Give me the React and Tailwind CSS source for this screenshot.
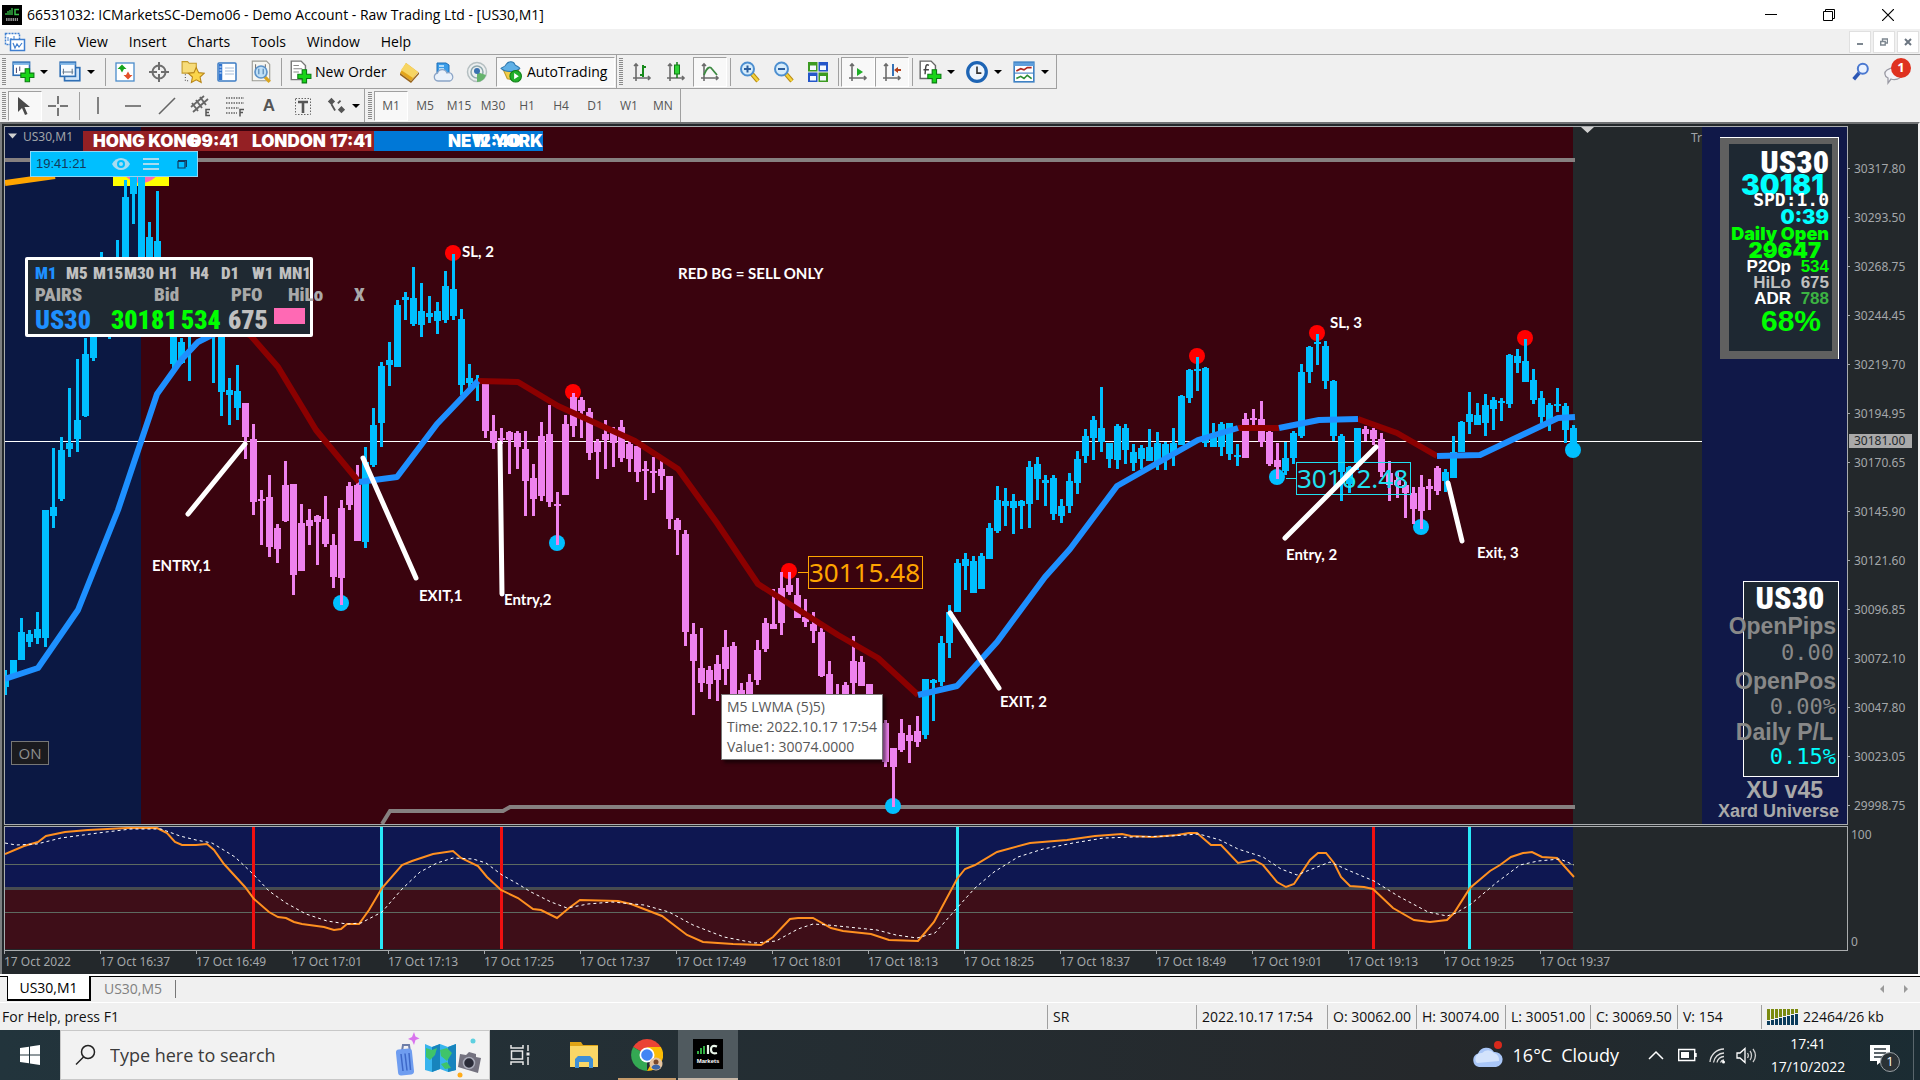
import React, { useState } from 'react';
import clsx from 'clsx';

/* ---------- chart data (screen space) ---------- */

// high, open/close top, open/close bottom, low
const CANDLES = [
  [670, 675, 687, 695], [660, 660, 677, 677], [618, 632, 660, 660], [630, 634, 642, 647], [612, 629, 638, 644],
  [510, 510, 638, 647], [448, 507, 516, 528], [437, 450, 499, 501], [388, 443, 449, 457], [359, 420, 439, 452],
  [338, 354, 416, 417], [290, 300, 358, 361], [252, 270, 320, 330], [262, 280, 328, 339], [240, 260, 300, 320],
  [180, 197, 258, 280], [160, 170, 194, 224], [160, 170, 270, 280], [222, 237, 300, 310], [191, 241, 320, 330],
  [262, 270, 322, 330], [290, 310, 364, 370], [338, 342, 363, 364], [300, 320, 330, 381], [280, 300, 325, 334],
  [285, 300, 326, 334], [290, 300, 330, 383], [300, 310, 392, 416], [378, 390, 395, 425], [365, 391, 408, 420],
  [403, 403, 437, 459], [424, 439, 502, 515], [490, 499, 501, 545], [475, 497, 547, 557], [524, 528, 549, 563],
  [461, 485, 521, 522], [484, 484, 575, 595], [504, 523, 571, 571], [509, 520, 526, 545], [515, 516, 522, 565],
  [496, 519, 544, 547], [534, 545, 577, 588], [500, 508, 578, 605], [482, 486, 505, 510], [465, 485, 541, 541],
  [447, 462, 542, 548], [408, 425, 465, 467], [362, 366, 423, 447], [342, 360, 365, 386], [300, 305, 367, 367],
  [292, 297, 300, 320], [267, 298, 324, 326], [283, 311, 325, 337], [296, 313, 317, 323], [302, 311, 321, 334],
  [271, 286, 320, 323], [254, 289, 316, 320], [309, 319, 385, 395], [364, 378, 383, 387], [375, 381, 384, 401],
  [384, 384, 431, 438], [415, 431, 443, 449], [428, 438, 440, 444], [431, 432, 440, 474], [431, 433, 447, 469],
  [431, 449, 481, 516], [464, 478, 499, 516], [422, 436, 496, 501], [405, 434, 502, 507], [492, 504, 506, 545],
  [415, 424, 495, 495], [393, 397, 426, 437], [397, 400, 411, 438], [408, 412, 453, 460], [439, 442, 452, 479],
  [420, 434, 440, 469], [427, 433, 443, 467], [420, 427, 458, 462], [442, 444, 459, 472], [446, 446, 472, 482],
  [461, 469, 471, 500], [457, 471, 473, 493], [461, 469, 476, 490], [476, 476, 519, 529], [518, 520, 530, 555],
  [530, 534, 632, 646], [623, 634, 661, 715], [628, 668, 683, 692], [666, 670, 684, 699], [655, 664, 680, 701],
  [630, 647, 669, 685], [642, 646, 697, 700], [683, 690, 700, 705], [674, 682, 700, 705], [640, 650, 680, 685],
  [618, 623, 649, 652], [589, 624, 629, 629], [572, 588, 623, 635], [572, 585, 592, 595], [578, 595, 618, 618],
  [599, 617, 622, 627], [612, 624, 631, 643], [628, 632, 676, 677], [661, 674, 700, 705], [684, 696, 700, 705],
  [682, 685, 700, 705], [636, 661, 683, 694], [656, 662, 686, 686], [684, 684, 694, 700], [694, 694, 710, 720],
  [720, 723, 762, 767], [748, 748, 767, 807], [719, 733, 750, 752], [725, 735, 741, 763], [716, 731, 742, 747],
  [679, 679, 735, 739], [679, 680, 683, 721], [636, 643, 682, 686], [605, 612, 643, 658], [559, 563, 612, 612],
  [553, 559, 566, 590], [556, 561, 593, 593], [553, 556, 589, 589], [523, 528, 559, 559], [486, 500, 531, 533],
  [488, 501, 506, 526], [494, 501, 508, 534], [500, 501, 506, 529], [461, 467, 504, 528], [457, 464, 479, 500],
  [475, 480, 483, 506], [475, 478, 514, 520], [499, 506, 516, 523], [473, 481, 506, 513], [451, 459, 483, 494],
  [429, 436, 456, 463], [416, 420, 438, 460], [387, 428, 442, 452], [443, 443, 459, 468], [424, 426, 460, 469],
  [424, 428, 450, 464], [444, 452, 463, 471], [445, 448, 459, 469], [429, 447, 461, 461], [432, 443, 463, 470],
  [442, 444, 460, 470], [428, 443, 453, 466], [395, 396, 445, 445], [369, 370, 398, 403], [357, 369, 371, 391],
  [367, 368, 443, 447], [423, 435, 447, 447], [422, 424, 447, 456], [423, 423, 454, 460], [444, 455, 457, 466],
  [413, 419, 458, 458], [409, 418, 420, 430], [401, 419, 442, 447], [430, 432, 464, 466], [443, 460, 467, 479],
  [442, 458, 471, 475], [431, 433, 458, 464], [364, 372, 436, 438], [346, 347, 372, 383], [334, 342, 344, 365],
  [341, 346, 381, 389], [380, 381, 436, 441], [434, 436, 472, 501], [466, 467, 484, 493], [428, 428, 463, 470],
  [426, 429, 434, 441], [428, 430, 439, 445], [433, 439, 472, 477], [461, 473, 485, 501], [472, 480, 485, 498],
  [482, 485, 493, 518], [487, 493, 509, 524], [475, 487, 511, 529], [479, 486, 489, 510], [466, 468, 491, 495],
  [469, 472, 481, 492], [436, 452, 478, 478], [421, 422, 452, 452], [392, 414, 422, 434], [403, 415, 425, 425],
  [394, 405, 423, 436], [397, 400, 409, 430], [398, 401, 403, 421], [354, 355, 404, 408], [349, 356, 363, 373],
  [339, 361, 382, 382], [369, 380, 400, 404], [391, 398, 417, 423], [403, 405, 423, 431], [388, 404, 406, 412],
  [403, 406, 430, 443], [425, 428, 445, 445],
];

const SELL_RANGES = [[30, 44], [60, 114], [155, 159], [170, 179]];
const isSell = (i) => SELL_RANGES.some(([a, b]) => i >= a && i <= b);

const MA_UP = [
  '5,679 38,668 78,610 118,510 157,394 182,359 198,342 212,335 238,328',
  '359,482 397,477 437,424 478,381',
  '918,695 957,686 997,642 1045,577 1070,549 1117,486 1198,440 1238,428',
  '1279,428 1319,420 1358,419',
  '1437,456 1480,455 1558,418 1575,417',
];
const MA_DOWN = [
  '238,328 251,336 278,367 316,430 359,482',
  '478,381 518,382 558,406 635,441 678,469 717,523 758,584 838,635 878,658 918,695',
  '1238,428 1279,428',
  '1358,419 1397,433 1437,456',
];

const HIGH_DOTS = [[453, 253], [573, 392], [789, 571], [1197, 356], [1317, 333], [1525, 338]];
const LOW_DOTS = [[341, 603], [557, 543], [893, 806], [1277, 477], [1421, 527], [1573, 450]];

const NOTE_LINES = [
  [245, 444, 188, 514], [363, 458, 416, 578], [500, 443, 502, 594], [950, 613, 999, 688],
  [1376, 447, 1285, 538], [1448, 483, 1462, 541],
];
const NOTES = [
  [462, 257, 'SL, 2'], [678, 279, 'RED BG = SELL ONLY'], [152, 571, 'ENTRY,1'], [419, 601, 'EXIT,1'],
  [504, 605, 'Entry,2'], [1000, 707, 'EXIT, 2'], [1286, 560, 'Entry, 2'], [1477, 558, 'Exit, 3'], [1330, 328, 'SL, 3'],
];

const OSC =
  '5,854 24,846 38,842 46,836 65,832 88,830 127,828 157,828 167,833 175,842 182,845 196,845 207,844 214,850 224,864 245,887 254,899 269,912 278,917 286,918 294,922 302,924 324,927 334,930 341,929 347,924 359,924 369,910 382,888 402,865 412,861 433,854 453,851 461,858 478,866 487,877 501,890 518,898 533,909 541,910 557,918 569,908 580,900 618,901 631,904 662,916 687,935 703,942 733,944 761,945 773,937 790,919 798,918 813,918 831,928 843,931 871,934 889,940 918,941 934,922 957,879 965,869 975,865 997,852 1030,843 1067,840 1095,836 1122,834 1131,836 1153,837 1177,835 1189,833 1197,833 1211,845 1221,845 1238,863 1254,860 1263,865 1277,882 1286,887 1294,884 1310,860 1318,853 1326,853 1334,863 1341,877 1350,886 1364,887 1373,889 1393,908 1414,920 1430,922 1447,920 1454,913 1470,888 1490,871 1500,865 1511,857 1523,853 1532,852 1542,857 1557,858 1574,877';
const SIGNAL =
  '5,843 16,845 37,844 61,838 98,833 131,829 161,829 180,836 196,840 212,843 222,849 235,857 253,874 269,891 286,903 306,914 327,921 347,924 361,923 382,912 402,889 420,872 437,863 453,858 473,859 486,863 502,875 518,884 531,892 551,902 567,908 588,904 612,902 644,905 669,912 693,925 724,937 755,943 776,941 798,929 813,924 828,925 877,930 896,935 917,938 935,933 957,908 975,888 994,872 1018,857 1043,849 1073,843 1104,838 1134,837 1171,836 1199,834 1220,840 1238,849 1263,857 1281,869 1297,875 1312,869 1330,862 1350,871 1374,881 1398,896 1428,912 1447,916 1456,913 1471,904 1496,883 1520,865 1538,861 1560,859 1574,865';

const PRICES = ['30317.80', '30293.50', '30268.75', '30244.45', '30219.70', '30194.95', '30170.65', '30145.90', '30121.60', '30096.85', '30072.10', '30047.80', '30023.05', '29998.75'];
const TIMES = ['17 Oct 2022', '17 Oct 16:37', '17 Oct 16:49', '17 Oct 17:01', '17 Oct 17:13', '17 Oct 17:25', '17 Oct 17:37', '17 Oct 17:49', '17 Oct 18:01', '17 Oct 18:13', '17 Oct 18:25', '17 Oct 18:37', '17 Oct 18:49', '17 Oct 19:01', '17 Oct 19:13', '17 Oct 19:25', '17 Oct 19:37'];

/* ---------- small parts ---------- */

const Svg = ({ size = 'size-[22px]', box = '0 0 22 22', children }) => (
  <svg viewBox={box} className={clsx('shrink-0', size)} fill="none" aria-hidden="true">{children}</svg>
);

const Grip = () => (
  <span className="ml-[2px] mr-[2px] h-[28px] w-1 shrink-0 bg-[repeating-linear-gradient(#8c8c8c_0_1px,#f0f0f0_1px_2px)]" />
);

const Sep = () => <span className="ml-[3px] mr-[2px] h-[28px] w-px shrink-0 bg-[#a0a0a0]" />;

const Tool = ({ label, pressed, children }) => (
  <button
    type="button"
    aria-label={label}
    className={clsx(
      'flex h-[30px] w-[34px] shrink-0 items-center justify-center border',
      pressed ? 'border-t-[#a0a0a0] border-l-[#a0a0a0] border-r-white border-b-white bg-[#f8f8f8]' : 'border-transparent'
    )}
  >
    {children}
  </button>
);

const Caret = () => <span className="border-x-4 border-t-4 border-x-transparent border-t-black" />;

const ToolDrop = ({ label, children }) => (
  <button type="button" aria-label={label} className="mr-[7px] flex h-[30px] w-[40px] shrink-0 items-center justify-between pl-[3px]">
    {children}
    <Caret />
  </button>
);

const Plus = ({ x = 10, y = 10 }) => (
  <path
    transform={`translate(${x} ${y})`}
    d="M4 0h4v4h4v4H8v4H4V8H0V4h4z"
    fill="#18d418"
    stroke="#0a7d12"
    strokeWidth="1"
  />
);

const Axes = ({ children }) => (
  <Svg>
    <path d="M5 3v17M2 17h17M3 5l2-2 2 2M17 15l2 2-2 2" stroke="#6b6b6b" strokeWidth="1.6" />
    {children}
  </Svg>
);

const Magnifier = ({ plus }) => (
  <Svg>
    <path d="M13 13l6 7" stroke="#b98a12" strokeWidth="4.5" />
    <path d="M13 13l6 7" stroke="#f3d23a" strokeWidth="2.5" />
    <circle cx="8.500" cy="8" r="6.500" fill="#d6ecfb" stroke="#4d8fd0" strokeWidth="2" />
    <path d={plus ? 'M5 8h7M8.500 4.500v7' : 'M5 8h7'} stroke="#2d5f9e" strokeWidth="2" />
  </Svg>
);

/* ---------- window chrome ---------- */

const TitleBar = () => (
  <header className="flex h-[29px] items-center bg-white pl-[2px] text-[14px] text-black">
    <svg viewBox="0 0 20 20" className="mr-[5px] size-5" aria-hidden="true">
      <rect width="20" height="20" fill="#000" />
      <path d="M4 10V8M6 10V6M8 10V5M10 10V3" stroke="#39c24a" strokeWidth="1.3" />
      <path d="M17 4.500h-4v5h4" stroke="#39c24a" strokeWidth="1.500" fill="none" />
      <path d="M4 14.500h12" stroke="#8f8f8f" strokeWidth="3" strokeDasharray="1.500 .7" />
    </svg>
    <h1 className="whitespace-nowrap">66531032: ICMarketsSC-Demo06 - Demo Account - Raw Trading Ltd - [US30,M1]</h1>
    <div className="ml-auto flex h-full pr-[2px]">
      <button type="button" aria-label="Minimize" className="flex w-[58px] items-center justify-center">
        <Svg size="size-3" box="0 0 12 12"><path d="M0 5.500h12" stroke="#000" /></Svg>
      </button>
      <button type="button" aria-label="Restore" className="flex w-[58px] items-center justify-center">
        <Svg size="size-3" box="0 0 12 12"><path d="M.5 2.500h9v9h-9zM2.500 2.500v-2h9v9h-2" stroke="#000" /></Svg>
      </button>
      <button type="button" aria-label="Close" className="flex w-[60px] items-center justify-center">
        <Svg size="size-3" box="0 0 12 12"><path d="M0 0l12 12M12 0L0 12" stroke="#000" strokeWidth="1.200" /></Svg>
      </button>
    </div>
  </header>
);

const MenuBar = () => (
  <nav className="flex h-[26px] items-center border-b border-[#a0a0a0] pl-1 text-[14px] text-black">
    <Svg>
      <rect x="1.500" y="2.500" width="14" height="11" fill="#fff" stroke="#3f7fd0" strokeWidth="1.500" strokeDasharray="2 1" />
      <path d="M4 10V6M7 11V7M10 9V5" stroke="#3f7fd0" />
      <rect x="6.500" y="8.500" width="14" height="11" fill="#fff" stroke="#3f7fd0" strokeWidth="1.500" />
      <path d="M9 12l2 5 2-4 2 3 3-4" stroke="#3f7fd0" strokeWidth="1.200" />
    </Svg>
    <ul className="flex gap-[21px] pl-2">
      {['File', 'View', 'Insert', 'Charts', 'Tools', 'Window', 'Help'].map((m) => (
        <li key={m}><button type="button">{m}</button></li>
      ))}
    </ul>
    <div className="ml-auto flex gap-[2px] pr-px">
      <button type="button" aria-label="Minimize chart" className="flex h-[22px] w-[22px] items-center justify-center border border-[#e0e0e0] bg-white">
        <Svg size="size-2" box="0 0 8 8"><path d="M1 6h6" stroke="#7d8790" strokeWidth="2" /></Svg>
      </button>
      <button type="button" aria-label="Restore chart" className="flex h-[22px] w-[22px] items-center justify-center border border-[#e0e0e0] bg-white">
        <Svg size="size-2" box="0 0 8 8"><path d="M.7 3.500h4.500v3.500H.7zM2.500 3V1h5v4H5.500" stroke="#7d8790" strokeWidth="1.400" /></Svg>
      </button>
      <button type="button" aria-label="Close chart" className="flex h-[22px] w-[22px] items-center justify-center border border-[#e0e0e0] bg-white">
        <Svg size="size-2" box="0 0 8 8"><path d="M1 1l6 6M7 1L1 7" stroke="#6b7580" strokeWidth="2" /></Svg>
      </button>
    </div>
  </nav>
);

const MainToolbar = () => (
  <div className="flex h-[34px] items-center justify-between">
    <div className="flex h-[34px] items-center border-r border-b border-[#a0a0a0] text-[14px] text-black">
      <Grip />
      <ToolDrop label="New chart">
        <Svg size="size-[24px]">
          <rect x="2" y="2" width="15" height="12" fill="#fff" stroke="#2f6fb5" strokeWidth="1.500" />
          <path d="M2 3.500h15" stroke="#7db4e6" strokeWidth="2" />
          <path d="M5 7v5M8 6v4" stroke="#557" />
          <Plus x={9} y={8} />
        </Svg>
      </ToolDrop>
      <ToolDrop label="Profiles">
        <Svg size="size-[24px]">
          <rect x="6" y="7" width="14" height="12" fill="#cfe3f7" stroke="#2f6fb5" strokeWidth="1.500" />
          <rect x="2" y="2" width="14" height="13" fill="#f7fbff" stroke="#2f6fb5" strokeWidth="1.500" />
          <path d="M2 3.500h14" stroke="#7db4e6" strokeWidth="2" />
          <path d="M4 11h10M5 8v5M13 8v5" stroke="#6a7d90" />
        </Svg>
      </ToolDrop>
      <Sep />
      <Tool label="Market Watch">
        <Svg>
          <rect x="2" y="2" width="18" height="18" fill="#fff" stroke="#4a8ccb" strokeWidth="1.300" />
          <path d="M8 3.500l4.500 4.500-2.500 0-2 3.500L6 8H3.500z" fill="#16a51d" />
          <path d="M14 18.500l4.500-4.500H16l-2-3.500L12 14H9.500z" fill="#e4512a" />
        </Svg>
      </Tool>
      <Tool label="Data Window">
        <Svg>
          <circle cx="11" cy="11" r="6.500" stroke="#6e6e6e" strokeWidth="2" />
          <path d="M11 1v8M11 13v8M1 11h8M13 11h8" stroke="#6e6e6e" strokeWidth="2" />
        </Svg>
      </Tool>
      <Tool label="Navigator">
        <Svg size="size-[24px]">
          <path d="M1 3V1.500h5l1.500 1.500H14v9H1z" fill="#f7dc7a" stroke="#c39a2a" />
          <path d="M4 13v6h4" stroke="#555" strokeDasharray="1 1.500" />
          <path d="M14 7l2.200 4.600 5 .6-3.700 3.400 1 5L14 18.200 9.500 20.600l1-5L6.800 12.200l5-.6z" fill="#fbd54a" stroke="#b98618" />
        </Svg>
      </Tool>
      <Tool label="Terminal">
        <Svg>
          <rect x="2" y="2" width="18" height="18" rx="1" fill="#fff" stroke="#3d7cc4" strokeWidth="1.500" />
          <path d="M4.500 3v16" stroke="#2f74cf" strokeWidth="3.500" />
          <path d="M9 7h9M9 10h9M9 13h9" stroke="#a8bed8" />
          <path d="M3.500 6h2M3.500 9h2M3.500 12h2" stroke="#eaf3ff" />
        </Svg>
      </Tool>
      <Tool label="Strategy Tester">
        <Svg size="size-[24px]">
          <path d="M3 1h13l3 3v15H3z" fill="#f5f5f0" stroke="#9a9a92" />
          <path d="M6 4v9M15 4v5" stroke="#777" />
          <path d="M14 15l5 5" stroke="#d9a521" strokeWidth="3" />
          <circle cx="11" cy="11" r="5.500" fill="#bfe0f7" stroke="#5c92c8" strokeWidth="1.500" />
          <path d="M9 8v5M13 8v5" stroke="#4a7fb0" />
        </Svg>
      </Tool>
      <Sep />
      <button type="button" className="flex h-[30px] w-[108px] items-center gap-[3px] pl-1">
        <Svg size="size-[24px]">
          <path d="M3 1h9l4 4v13H3z" fill="#fff" stroke="#777" strokeWidth="1.300" />
          <path d="M5 5h5M5 8h8M5 11h5" stroke="#888" />
          <Plus x={9} y={9} />
        </Svg>
        <span className="whitespace-nowrap">New Order</span>
      </button>
      <Tool label="MetaEditor">
        <Svg>
          <path d="M8 2l12 9-7 9L2 12z" fill="#e3a51b" />
          <path d="M8 2l12 9-5 6L3 9z" fill="#f7d563" />
          <path d="M2 12v2l11 8 8-9v-2l-8 9z" fill="#99641a" />
        </Svg>
      </Tool>
      <Tool label="Virtual Hosting">
        <Svg>
          <path d="M5 2h9l3 2v10H5z" fill="#3a9ce8" stroke="#1d6fb8" />
          <path d="M7 5h5M7 8h5" stroke="#d8f0ff" strokeWidth="1.500" />
          <path d="M6 20a4 4 0 01-.5-7.900A5 5 0 0115 12a4 4 0 013 8z" fill="#eaf1fa" stroke="#8ba4c6" strokeWidth="1.300" />
        </Svg>
      </Tool>
      <Tool label="Signals">
        <Svg>
          <circle cx="11" cy="11" r="9.500" fill="#eceff0" stroke="#b5bfc1" strokeWidth="1.500" />
          <circle cx="11" cy="11" r="6" stroke="#8fa8ad" strokeWidth="1.500" />
          <path d="M11 11v10a10 10 0 009-7z" fill="#66b36d" />
          <circle cx="11" cy="10" r="3" fill="#3a72b0" />
        </Svg>
      </Tool>
      <button
        type="button"
        aria-pressed="true"
        className="ml-[2px] flex h-[30px] w-[119px] items-center gap-1 border border-t-[#a0a0a0] border-l-[#a0a0a0] border-r-white border-b-white bg-[#f8f8f8] pl-[3px]"
      >
        <Svg size="size-[23px]">
          <path d="M3 9h15l-4 10-7-1z" fill="#f1cd4a" stroke="#c39b26" />
          <path d="M1 8c2-2 4-1 5-4 2-3 7-3 8 0 1 2 4 2 5 4-4 4-14 4-18 0z" fill="#5fb0e6" stroke="#2b76ae" />
          <circle cx="15" cy="15.500" r="5.500" fill="#22b02a" stroke="#0e7d15" />
          <path d="M13.500 12.500l4.500 3-4.500 3z" fill="#fff" />
        </Svg>
        <span className="whitespace-nowrap">AutoTrading</span>
      </button>
      <span className="ml-px h-[34px] w-px bg-[#a0a0a0]" />
      <Grip />
      <Tool label="Bar chart"><Axes><path d="M12 4v12M12 6h3M9 14h3" stroke="#188a1c" strokeWidth="2" /></Axes></Tool>
      <Tool label="Candlesticks">
        <Axes><path d="M12 1v16" stroke="#127a17" strokeWidth="1.500" /><rect x="9.500" y="4" width="5" height="9" fill="#2fd336" stroke="#127a17" /></Axes>
      </Tool>
      <Tool label="Line chart" pressed><Axes><path d="M5 14c3-8 6-9 8-6l5 6" stroke="#3e8a43" strokeWidth="1.800" /></Axes></Tool>
      <Sep />
      <Tool label="Zoom In"><Magnifier plus /></Tool>
      <Tool label="Zoom Out"><Magnifier /></Tool>
      <Tool label="Tile Windows">
        <Svg>
          <path d="M1 1h9.500v9.500H1z" fill="#3c9a22" /><path d="M11.500 1H21v9.500h-9.500z" fill="#2456c9" />
          <path d="M1 11.500h9.500V21H1z" fill="#2456c9" /><path d="M11.500 11.500H21V21h-9.500z" fill="#3c9a22" />
          <path d="M3 4.500h6v4.500H3zM13 4.500h6v4.500h-6zM3 15h6v4.500H3zM13 15h6v4.500h-6z" fill="#f3f8ff" />
        </Svg>
      </Tool>
      <Sep />
      <Tool label="Auto Scroll" pressed><Axes><path d="M10 7v8l6-4z" fill="#1fae27" /></Axes></Tool>
      <Tool label="Chart Shift" pressed><Axes><path d="M12 3v12" stroke="#3573b8" strokeWidth="2" /><path d="M13 9l4-3v2h3v2h-3v2z" fill="#b3401d" /></Axes></Tool>
      <Sep />
      <ToolDrop label="Indicators">
        <Svg size="size-[24px]">
          <path d="M2 1h10l4 4v12H2z" fill="#fff" stroke="#666" strokeWidth="1.300" />
          <path d="M10 5c-3-2-3 1-3.500 8M5 9h5" stroke="#444" strokeWidth="1.300" />
          <Plus x={9} y={9} />
        </Svg>
      </ToolDrop>
      <ToolDrop label="Periods">
        <Svg size="size-[24px]">
          <circle cx="11" cy="11" r="8.500" fill="#eef5fc" stroke="#1d64b4" strokeWidth="3" />
          <path d="M11 6v6h4" stroke="#333" strokeWidth="1.500" />
        </Svg>
      </ToolDrop>
      <ToolDrop label="Templates">
        <Svg size="size-[24px]">
          <rect x="2" y="2" width="18" height="18" fill="#fff" stroke="#3f82c4" strokeWidth="1.500" />
          <path d="M2 4h18" stroke="#5f9fdc" strokeWidth="3" />
          <path d="M2 12h18" stroke="#3f82c4" />
          <path d="M4 10l4-2 3 1 3-2 4 0" stroke="#b0251d" strokeWidth="1.500" />
          <path d="M4 17l4-2 3 2 3-3 4 3" stroke="#2d8d33" strokeWidth="1.500" />
        </Svg>
      </ToolDrop>
    </div>
    <div className="flex items-center gap-3 pr-[9px]">
      <button type="button" aria-label="Search">
        <Svg size="size-[20px]">
          <path d="M9 12l-6 7" stroke="#2c57b5" strokeWidth="4" />
          <circle cx="13" cy="7.500" r="5.500" fill="#eaf2ff" stroke="#4a78d0" strokeWidth="2.200" />
        </Svg>
      </button>
      <button type="button" aria-label="Notifications" className="relative size-7">
        <svg viewBox="0 0 28 28" className="size-7" aria-hidden="true">
          <path d="M4 12c6-4 16-2 15 4s-8 6-11 5l-3 4 0-5c-4-2-4-6-1-8z" fill="#f4f4f8" stroke="#9a9aa4" strokeWidth="1.300" />
        </svg>
        <span className="absolute top-0 right-0 flex size-[20px] items-center justify-center rounded-full bg-[#df3220] text-[13px] font-bold text-white">1</span>
      </button>
    </div>
  </div>
);

const LineToolbar = () => {
  const [frame, setFrame] = useState('M1');
  return (
    <div className="flex h-[33px] items-center text-[12px] text-[#555]">
      <div className="flex h-full items-center border-r border-[#a0a0a0] pt-px">
        <Grip />
        <Tool label="Cursor" pressed>
          <Svg><path d="M4 2v15l4-4 3 7 2.500-1-3-7H16z" fill="#4a4a4a" /></Svg>
        </Tool>
        <Tool label="Crosshair">
          <Svg><path d="M10 1v8M10 13v8M0 11h8M12 11h8" stroke="#777" strokeWidth="2" /></Svg>
        </Tool>
        <Sep />
        <Tool label="Vertical line"><Svg><path d="M10 2v17" stroke="#666" strokeWidth="1.600" /></Svg></Tool>
        <Tool label="Horizontal line"><Svg><path d="M3 11h16" stroke="#666" strokeWidth="1.600" /></Svg></Tool>
        <Tool label="Trendline"><Svg><path d="M3 19L19 3" stroke="#666" strokeWidth="1.600" /></Svg></Tool>
        <Tool label="Equidistant channel">
          <Svg>
            <path d="M1 12L14 1M3 17L18 4M2 8l6 8M6 5l6 8M10 2l6 8" stroke="#666" strokeWidth="1.800" />
            <path d="M20 14.500h-4v6h4M16 17.500h3" stroke="#555" strokeWidth="1.500" />
          </Svg>
        </Tool>
        <Tool label="Fibonacci">
          <Svg>
            <path d="M2 3h18M2 8h18M2 13h13M2 18h11" stroke="#666" strokeWidth="1.600" strokeDasharray="1.500 1" />
            <path d="M20 14.500h-4v7M16 17.500h3" stroke="#555" strokeWidth="1.500" />
          </Svg>
        </Tool>
        <Tool label="Text"><span className="font-['Liberation_Sans'] text-[17px] font-bold">A</span></Tool>
        <Tool label="Text label">
          <Svg>
            <rect x="3.500" y="3.500" width="15" height="16" stroke="#666" strokeDasharray="1.500 1.500" />
            <path d="M6 7h10M11 7v11" stroke="#555" strokeWidth="2.600" />
          </Svg>
        </Tool>
        <button type="button" aria-label="Arrows" className="mr-[4px] flex h-[30px] w-[40px] items-center justify-between pl-[6px]">
          <Svg size="size-[20px]">
            <path d="M6 2l4 4-4 4-4-4zM17 11l4 4-4 4-4-4z" fill="#555" />
            <path d="M6 9l4 7M13 8l3-3" stroke="#555" strokeWidth="2" />
          </Svg>
          <Caret />
        </button>
      </div>
      <div className="flex h-full items-center border-r border-[#a0a0a0] pt-px pl-px">
        <Grip />
        {['M1', 'M5', 'M15', 'M30', 'H1', 'H4', 'D1', 'W1', 'MN'].map((f) => (
          <button
            key={f}
            type="button"
            onClick={() => setFrame(f)}
            className={clsx(
              'flex h-[30px] w-[34px] items-center justify-center border',
              frame === f ? 'border-t-[#a0a0a0] border-l-[#a0a0a0] border-r-white border-b-white bg-[#f8f8f8]' : 'border-transparent'
            )}
          >
            {f}
          </button>
        ))}
      </div>
    </div>
  );
};

/* ---------- chart ---------- */

const PriceChart = () => (
  <svg viewBox="5 127 1842 697" preserveAspectRatio="xMinYMin meet" className="block h-[697px] w-full" aria-label="US30 one minute chart">
    <rect x="5" y="127" width="136" height="697" fill="#0b1843" />
    <rect x="141" y="127" width="1432" height="697" fill="#3a030e" />
    <rect x="1573" y="127" width="129" height="697" fill="#23282b" />
    <rect x="1702" y="127" width="145" height="697" fill="#101848" />

    <rect x="113" y="147" width="56" height="39" fill="#ffff00" />
    <circle cx="141" cy="163" r="20" fill="#ff69b4" />
    <circle cx="141" cy="163" r="13" fill="#fff" />

    <path d="M5 160H1575" stroke="#868080" strokeWidth="4" />
    <path d="M382 824l8-13h113l7-4h1065" stroke="#868080" strokeWidth="4" fill="none" />
    <path d="M5 183l50-7" stroke="#ffa500" strokeWidth="6" />
    <path d="M5 441.500H1702" stroke="#fff" />

    {HIGH_DOTS.map(([x, y]) => <circle key={x} cx={x} cy={y} r="8" fill="#ff0000" />)}
    {LOW_DOTS.map(([x, y]) => <circle key={x} cx={x} cy={y} r="8" fill="#00bfff" />)}

    <g shapeRendering="crispEdges">
      {CANDLES.map(([high, top, bottom, low], i) => (
        <g key={i} fill={isSell(i) ? '#ee82ee' : '#00bfff'}>
          <rect x={4 + 8 * i} y={high} width="3" height={Math.max(low - high, 2)} />
          <rect x={2 + 8 * i} y={top} width="7" height={Math.max(bottom - top, 2)} />
        </g>
      ))}
    </g>

    <g fill="none" strokeWidth="6" strokeLinejoin="round">
      {MA_DOWN.map((p) => <polyline key={p} points={p} stroke="#8b0000" />)}
      {MA_UP.map((p) => <polyline key={p} points={p} stroke="#1e90ff" />)}
    </g>

    <g fill="none" className="font-['Noto_Sans',sans-serif] text-[26px]">
      <path d="M798 572.500h10" stroke="#ffa500" />
      <rect x="808.500" y="556.500" width="114" height="32" stroke="#ffa500" />
      <text x="809" y="582" fill="#ffa500">30115.48</text>
      <path d="M1286 478.500h10" stroke="#20e0f0" />
      <rect x="1296.500" y="462.500" width="114" height="32" stroke="#20e0f0" />
      <text x="1297" y="488" fill="#20e0f0">30162.48</text>
    </g>

    <g stroke="#fff" strokeWidth="5" strokeLinecap="round">
      {NOTE_LINES.map(([x1, y1, x2, y2]) => <line key={x1} x1={x1} y1={y1} x2={x2} y2={y2} />)}
    </g>
    <g fill="#fff" className="font-[Lato,sans-serif] text-[15px] font-bold">
      {NOTES.map(([x, y, t]) => <text key={t} x={x} y={y}>{t}</text>)}
    </g>

    <path d="M8 133.500h9l-4.500 5zM1581 127h13l-6.500 6z" fill="#d0d0d0" />
    <g fill="#a0a4a8" className="font-['Noto_Sans',sans-serif] text-[12px]">
      <text x="23" y="141">US30,M1</text>
      <text x="1691" y="142">Tr</text>
    </g>
  </svg>
);

const Oscillator = () => (
  <svg viewBox="5 827 1842 123" preserveAspectRatio="xMinYMin meet" className="block h-[123px] w-full" aria-label="Oscillator">
    <rect x="5" y="827" width="1568" height="61" fill="#0e1751" />
    <rect x="5" y="889" width="1568" height="60" fill="#3e0e18" />
    <path d="M5 864.500H1573M5 912.500H1573" stroke="#5d6a60" />
    <path d="M5 888.500H1573" stroke="#484c50" strokeWidth="3" />
    <path d="M253.500 827v122M501.500 827v122M1373.500 827v122" stroke="#f01010" strokeWidth="3" />
    <path d="M381.500 827v122M957.500 827v122M1469.500 827v122" stroke="#28e8f8" strokeWidth="3" />
    <polyline points={OSC} stroke="#ff9020" strokeWidth="2" fill="none" />
    <polyline points={SIGNAL} stroke="#fff" strokeDasharray="3 3" fill="none" />
  </svg>
);

const SessionBar = () => (
  <div className="absolute top-[3px] left-[78px] flex h-5 w-[460px] items-center pt-px font-[Inter,sans-serif] text-[17px] leading-5 font-black whitespace-nowrap text-white">
    <div className="relative flex h-5 w-[156px] items-center bg-[#942024] pl-[10px]">
      HONG KONG
      <span className="absolute right-[1px]">09:41</span>
    </div>
    <div className="relative flex h-5 w-[135px] items-center bg-[#942024] pl-[13px]">
      LONDON
      <span className="absolute right-[2px]">17:41</span>
    </div>
    <div className="relative flex h-5 w-[169px] items-center justify-end bg-[#0078d7]">
      NEW YORK
      <span className="absolute right-[22px]">12:40</span>
    </div>
  </div>
);

const ClockWidget = () => (
  <div className="absolute top-[24px] left-[25px] flex h-[26px] w-[168px] items-center border border-[#8fd8f5] bg-[#00bfff] pl-[5px] font-['Liberation_Sans'] text-[13px] text-[#123a5c]">
    <span className="w-[75px]">19:41:21</span>
    <Svg size="size-[20px]" box="0 0 20 20">
      <path d="M1 10c4-8 14-8 18 0-4 8-14 8-18 0z" fill="#a8dcf0" />
      <circle cx="10" cy="10" r="4" fill="#00bfff" />
      <circle cx="10" cy="10" r="2" fill="#a8dcf0" />
    </Svg>
    <span className="ml-3" />
    <Svg size="size-[16px]" box="0 0 16 16"><path d="M0 3h16M0 8h16M0 13h16" stroke="#a8dcf0" strokeWidth="2" /></Svg>
    <span className="ml-[18px]" />
    <Svg size="size-[10px]" box="0 0 10 10"><path d="M1 2.500h7v6.500H1zM1 1.500h8.500v6.500" stroke="#123a5c" strokeWidth="1.200" /></Svg>
  </div>
);

const PairsPanel = () => (
  <div className="absolute top-[130px] left-[20px] h-[80px] w-[288px] rounded-xs border-3 border-white bg-[#1f2932] pt-[3px] pl-[7px] font-['Liberation_Sans_Narrow','Roboto_Condensed',sans-serif] font-black whitespace-nowrap text-[#c0c0c0]">
    <div className="grid grid-cols-[31px_27px_31px_35px_31px_31px_31px_27px_30px] text-left text-[17px] leading-[20px]">
      {['M1', 'M5', 'M15', 'M30', 'H1', 'H4', 'D1', 'W1', 'MN1'].map((f, i) => (
        <span key={f} className={clsx(i === 0 && 'text-[#1e90ff]')}>{f}</span>
      ))}
    </div>
    <div className="grid grid-cols-[119px_77px_57px_66px_20px] text-[19px] leading-[24px] text-[#a9a9a9]">
      <span>PAIRS</span><span>Bid</span><span>PFO</span><span>HiLo</span><span>X</span>
    </div>
    <div className="grid grid-cols-[76px_70px_47px_46px_31px] items-center text-[26px] leading-[26px]">
      <span className="text-[#1e90ff]">US30</span>
      <span className="text-[#00ff00]">30181</span>
      <span className="text-[#00ff00]">534</span>
      <span>675</span>
      <span className="mb-2 h-4 bg-[#ff69b4]" />
    </div>
  </div>
);

const QuotePanel = () => (
  <div className="absolute top-[10px] right-2 h-[222px] w-[119px] border-t border-r border-white bg-[#606060] pt-[6px] pr-[6px] pl-[9px]">
    <div className="flex h-[207px] flex-col items-end bg-[#1e2832] pt-[3px] pr-[3px] font-[Inter,sans-serif] font-black whitespace-nowrap text-[#00ff00]">
      <span className="font-['Liberation_Sans_Narrow','Roboto_Condensed',sans-serif] text-[32px] leading-[30px] text-white">US30</span>
      <span className="pr-[5px] text-[28px] leading-[16px] text-[#00ffff]">30181</span>
      <span className="font-['DejaVu_Sans_Mono'] text-[18px] leading-[14px] font-bold text-white">SPD:1.0</span>
      <span className="text-[20px] leading-[20px] text-[#00ffff]">0:39</span>
      <span className="text-[18px] leading-[14px]">Daily Open</span>
      <span className="pr-2 text-[22px] leading-[18px]">29647</span>
      <span className="grid grid-cols-[auto_38px] text-right font-['Liberation_Sans'] text-[17px] leading-[16px] font-bold">
        <span className="text-white">P2Op</span><span>534</span>
        <span className="text-[#c0c0c0]">HiLo</span><span className="text-[#c0c0c0]">675</span>
        <span className="text-white">ADR</span><span className="text-[#3cb343]">788</span>
      </span>
      <span className="pr-2 font-['Liberation_Sans'] text-[30px] leading-[28px] font-bold">68%</span>
    </div>
  </div>
);

const AccountPanel = () => (
  <div className="absolute right-2 bottom-[5px] flex w-[140px] flex-col items-end font-['Liberation_Sans'] font-bold whitespace-nowrap text-[#888]">
    <div className="flex h-[196px] w-[96px] flex-col items-end border border-white bg-[#1e2832] pt-[2px] pr-[2px]">
      <span className="self-center font-['Liberation_Sans_Narrow','Roboto_Condensed',sans-serif] text-[32px] leading-[28px] font-black text-white">US30</span>
      <span className="text-[23px] leading-[28px]">OpenPips</span>
      <span className="pr-[2px] font-['DejaVu_Sans_Mono'] text-[22px] leading-[26px] font-normal">0.00</span>
      <span className="text-[23px] leading-[30px]">OpenPos</span>
      <span className="font-['DejaVu_Sans_Mono'] text-[22px] leading-[22px] font-normal">0.00%</span>
      <span className="pr-[3px] text-[23px] leading-[28px]">Daily P/L</span>
      <span className="font-['DejaVu_Sans_Mono'] text-[22px] leading-[22px] font-normal text-[#00ffff]">0.15%</span>
    </div>
    <span className="pr-4 text-[23px] leading-[26px] text-[#a9a9a9]">XU v45</span>
    <span className="text-[18px] leading-[16px] text-[#a9a9a9]">Xard Universe</span>
  </div>
);

const Tooltip = () => (
  <div role="tooltip" className="absolute top-[567px] left-[716px] border border-[#767676] bg-white px-[5px] py-[2px] text-[14px] leading-[20px] whitespace-nowrap text-[#575757] shadow-[3px_3px_3px_rgba(0,0,0,0.5)]">
    <p>M5 LWMA (5)5)</p>
    <p>Time: 2022.10.17 17:54</p>
    <p>Value1: 30074.0000</p>
  </div>
);

const ChartWindow = () => (
  <main className="border-t-2 border-r-2 border-l-2 border-t-[#6f7173] border-r-[#f0f0f0] border-l-[#7c7e80] bg-[#23282b] pt-[2px] pl-[2px]">
    <div className="flex">
      <div className="min-w-0 flex-1">
        <section className="relative border border-[#a9acae]">
          <PriceChart />
          <SessionBar />
          <ClockWidget />
          <PairsPanel />
          <QuotePanel />
          <AccountPanel />
          <Tooltip />
          <button type="button" className="absolute bottom-[59px] left-[6px] h-[24px] w-[38px] border border-[#777] bg-[#1b1b1f] text-[15px] leading-[20px] text-[#8f8f8f]">ON</button>
        </section>
        <section className="mt-px border border-[#a9acae]">
          <Oscillator />
        </section>
      </div>
      <div className="w-[70px] shrink-0 font-['Noto_Sans',sans-serif] text-[12px] text-[#a4a7aa]">
        <div className="relative h-[700px] overflow-hidden pt-[18px]">
          {PRICES.map((p) => (
            <div key={p} className="flex h-[49px] items-center gap-1">
              <span className="h-px w-[2px] bg-[#a4a7aa]" />
              <span>{p}</span>
            </div>
          ))}
          <span className="absolute top-[308px] left-px flex h-[14px] w-[63px] items-center bg-[#a9a9a9] pl-[5px] text-[#23282b]">30181.00</span>
        </div>
        <div className="flex h-[125px] flex-col justify-between pl-[3px] leading-[18px]">
          <span>100</span>
          <span>0</span>
        </div>
      </div>
    </div>
    <div className="flex h-[23px] overflow-hidden font-['Noto_Sans',sans-serif] text-[12px] text-[#a4a7aa]">
      {TIMES.map((t) => (
        <div key={t} className="flex w-24 shrink-0 flex-col whitespace-nowrap">
          <span className="h-[3px] w-px bg-[#a4a7aa]" />
          <span className="leading-[15px]">{t}</span>
        </div>
      ))}
    </div>
  </main>
);

/* ---------- bottom ---------- */

const ChartTabs = () => (
  <div className="flex h-[28px] border-t-2 border-white bg-[#f0f0f0]">
    <div className="flex h-[25px] w-full border-t border-black pl-[7px] text-[14px]">
      <button type="button" className="-mt-px h-[25px] w-[84px] border-r-2 border-b-2 border-l border-black bg-white leading-[22px] text-black">US30,M1</button>
      <button type="button" className="my-[3px] w-[85px] border-r border-[#777] leading-[18px] text-[#808080]">US30,M5</button>
      <div className="ml-auto flex items-center gap-5 pr-3">
        <span className="border-y-4 border-r-4 border-y-transparent border-r-[#9a9a9a]" />
        <span className="border-y-4 border-l-4 border-y-transparent border-l-[#9a9a9a]" />
      </div>
    </div>
  </div>
);

const StatusBar = () => (
  <footer className="flex h-[28px] items-center border-t border-white pl-[2px] text-[14px] whitespace-nowrap text-[#111]">
    <span className="flex-1">For Help, press F1</span>
    <span className="h-[24px] w-[149px] border-l border-[#a0a0a0] pl-[5px] leading-[24px]">SR</span>
    <span className="h-[24px] w-[131px] border-l border-[#a0a0a0] pl-[5px] leading-[24px]">2022.10.17 17:54</span>
    <span className="h-[24px] w-[89px] border-l border-[#a0a0a0] pl-[5px] leading-[24px]">O: 30062.00</span>
    <span className="h-[24px] w-[89px] border-l border-[#a0a0a0] pl-[5px] leading-[24px]">H: 30074.00</span>
    <span className="h-[24px] w-[85px] border-l border-[#a0a0a0] pl-[5px] leading-[24px]">L: 30051.00</span>
    <span className="h-[24px] w-[87px] border-l border-[#a0a0a0] pl-[5px] leading-[24px]">C: 30069.50</span>
    <span className="h-[24px] w-[84px] border-l border-[#a0a0a0] pl-[5px] leading-[24px]">V: 154</span>
    <span className="flex h-[24px] w-[159px] items-center gap-1 border-l border-[#a0a0a0] pl-[5px]">
      <svg viewBox="0 0 32 16" className="h-4 w-8" aria-hidden="true">
        {[0, 1, 2, 3, 4, 5, 6, 7].map((n) => (
          <g key={n}>
            <rect x={n * 4} y="0" width="3" height={11 - n} fill="#7a8a10" />
            <rect x={n * 4} y={12 - n} width="3" height={4 + n} fill="#0b3c5c" />
          </g>
        ))}
      </svg>
      22464/26 kb
    </span>
  </footer>
);

const Taskbar = () => (
  <div className="flex h-[50px] items-center bg-linear-to-r from-[#22343c] via-[#25282b] via-75% to-[#1b2c33] text-white">
    <button type="button" aria-label="Start" className="flex h-full w-[60px] items-center justify-center">
      <Svg size="size-5" box="0 0 20 20"><path d="M0 3l9-1.300V9.500H0zM10 1.500L20 0v9.500H10zM0 10.500h9v7.800L0 17zM10 10.500h10V20l-10-1.500z" fill="#fff" /></Svg>
    </button>
    <label className="flex h-full w-[430px] items-center border border-[#c8c8c8] bg-[#f2f2f2] pr-[6px] pl-[14px]">
      <Svg><circle cx="13" cy="8" r="6.500" stroke="#222" strokeWidth="1.500" /><path d="M8.500 13L1 20.500" stroke="#222" strokeWidth="1.500" /></Svg>
      <input type="text" aria-label="Type here to search" placeholder="Type here to search" className="ml-[13px] min-w-0 flex-1 bg-transparent text-[18px] outline-none placeholder:text-[#3a3a3a]" />
      <svg viewBox="0 0 90 48" className="h-12 w-[90px]" aria-hidden="true">
        <path d="M21 1l1.500 4.500 4 2-4 1.500L21 14l-2-4.500-4-1.500 4-2z" fill="#d973ee" />
        <path d="M9 20l1-6 6 0 1 7" stroke="#6d7ea8" strokeWidth="2" fill="none" />
        <rect x="4" y="18" width="16" height="26" rx="3" fill="#6f9df0" transform="rotate(-6 12 31)" />
        <path d="M8 23l2 17M12 22.500l2 17M16 22l1.500 17" stroke="#3d68c8" strokeWidth="1.500" />
        <path d="M32 13l7 3 8-3 8 3 8-3v26l-8 2-8-3-8 3-7-2z" fill="#38b4ee" />
        <path d="M39 16l8-3v25l-8 3zM55 16l8-3v26l-8 2z" fill="#1784bd" />
        <path d="M33 17l6 2 5-2-2 7-5 5-4-3zM47 19l7-2 5 5-5 8-6-5zM48 33l6-2 4 6-6 1z" fill="#3fc46a" />
        <path d="M67 23l6 1 3-3 7 2 0 3 5 1-3 15-20-6z" fill="#74727f" />
        <circle cx="76" cy="32" r="5.500" fill="#2b2c38" stroke="#a9abb8" strokeWidth="1.500" />
        <circle cx="80" cy="10" r="2.500" fill="#5fd0e0" />
        <circle cx="67" cy="44" r="2.500" fill="#ffab1a" />
      </svg>
    </label>
    <button type="button" aria-label="Task View" className="flex h-full w-[60px] items-center justify-center">
      <Svg size="size-5" box="0 0 20 20">
        <path d="M1 0v3h12V0M1 20v-3h12v3M1.500 6h11v8h-11zM18 0v6M18 12v8" stroke="#e8e8e8" strokeWidth="1.500" />
        <path d="M16.500 7.500h3v3h-3z" fill="#e8e8e8" />
      </Svg>
    </button>
    <button type="button" aria-label="File Explorer" className="ml-1 flex h-full w-[60px] items-center justify-center">
      <Svg size="size-7" box="0 0 28 28">
        <path d="M0 1h11l2 3h15v8H0z" fill="#e0a416" />
        <path d="M0 5h28v21H0z" fill="#fbd766" />
        <path d="M5 27v-9l3-3h12l3 3v9h-4v-6H9v6z" fill="#3f8fd6" />
      </Svg>
    </button>
    <button type="button" aria-label="Google Chrome" className="ml-1 flex h-full w-[58px] flex-col items-center border-b-2 border-[#c59a6a] pt-[9px]">
      <Svg size="size-[32px]" box="0 0 32 32">
        <path d="M16 16L2.200 8A16 16 0 0129.800 8z" fill="#ea4335" />
        <path d="M16 16L2.200 8A16 16 0 0016 32z" fill="#34a853" />
        <path d="M16 8h13.900a16 16 0 01-13.900 24l7-12z" fill="#fbbc05" />
        <circle cx="16" cy="16" r="7.500" fill="#fff" />
        <circle cx="16" cy="16" r="5.800" fill="#4285f4" />
        <circle cx="25" cy="25" r="6.500" fill="#e5c4a0" />
        <circle cx="25" cy="23" r="2.500" fill="#7a4a2c" />
        <path d="M20.500 28.500c1-4 8-4 9 0-2 3-7 3-9 0z" fill="#3a66a8" />
      </Svg>
    </button>
    <button type="button" aria-label="MetaTrader" className="ml-[2px] flex h-full w-[60px] items-center justify-center border-b-2 border-[#c8b8a8] bg-[#505a5f]">
      <Svg size="size-[30px]" box="0 0 30 30">
        <rect width="30" height="30" fill="#000" />
        <path d="M5 15v-3M8 15V9M11 15V7" stroke="#39c24a" strokeWidth="1.800" />
        <path d="M15 6v9M24 7.500c-5-2-6 1-6 3s1 5 6 3.500" stroke="#e8f5e8" strokeWidth="2.200" />
        <text x="15" y="24" textAnchor="middle" fill="#fff" className="font-['Liberation_Sans'] text-[6px] font-bold">Markets</text>
      </Svg>
    </button>
    <div className="ml-auto flex h-full items-center">
      <button type="button" className="flex items-center text-[18px] whitespace-nowrap">
        <Svg size="size-[32px]" box="0 0 32 32">
          <path d="M8 28a7 7 0 01-1-13.500A9 9 0 0123 13a7.500 7.500 0 012 15z" fill="#a9c6f7" />
          <path d="M6 24a6 6 0 015-10 8 8 0 0112 0 7 7 0 015 8z" fill="#d3e3fc" />
          <circle cx="27" cy="6" r="4" fill="#d8291c" />
        </Svg>
        <span className="mr-[9px] ml-[10px]">16°C</span>
        <span>Cloudy</span>
      </button>
      <button type="button" aria-label="Show hidden icons" className="ml-[29px]">
        <Svg size="size-[16px]" box="0 0 16 16"><path d="M1 12l7-7 7 7" stroke="#fff" strokeWidth="1.500" /></Svg>
      </button>
      <button type="button" aria-label="Battery" className="ml-[14px]">
        <Svg size="h-[14px] w-[19px]" box="0 0 19 14"><path d="M.7 1.500h16v11H.7zM18 5v4" stroke="#fff" strokeWidth="1.400" /><path d="M3 4h8v6H3z" fill="#fff" /></Svg>
      </button>
      <button type="button" aria-label="Network" className="ml-[12px]">
        <Svg size="size-[17px]" box="0 0 17 17">
          <path d="M1 15A14 14 0 0115 2M4.500 15.500A11 11 0 0115 6M8 15.500A7 7 0 0115 9.500M11.500 15.500A4 4 0 0115 13" stroke="#e0e0e0" strokeWidth="1.300" />
          <circle cx="14.500" cy="15" r="1.500" fill="#fff" />
        </Svg>
      </button>
      <button type="button" aria-label="Volume" className="ml-[10px]">
        <Svg size="h-[17px] w-[21px]" box="0 0 21 17">
          <path d="M1 6h3l5-4.500v14L4 11H1z" stroke="#fff" strokeWidth="1.300" />
          <path d="M11.500 6c1 1.500 1 3.500 0 5M14 4c2 2.500 2 6.500 0 9M17 2c3 4 3 9 0 13" stroke="#ccc" strokeWidth="1.300" />
        </Svg>
      </button>
      <div className="ml-[12px] w-[78px] text-center text-[14px] leading-[23px]">
        <p>17:41</p>
        <p>17/10/2022</p>
      </div>
      <button type="button" aria-label="Action Center" className="relative ml-[22px] size-[34px]">
        <Svg size="size-[22px]" box="0 0 22 22">
          <path d="M1 1h20v16h-8l-5 4v-4H1z" fill="#fff" />
          <path d="M5 5h12M5 9h12M5 13h8" stroke="#26323a" strokeWidth="1.400" />
        </Svg>
        <span className="absolute right-[3px] bottom-0 flex size-5 items-center justify-center rounded-full border border-[#9aa0a4] bg-[#2b3236] text-[13px]">1</span>
      </button>
      <span className="ml-[10px] mr-[6px] h-full w-px bg-[#5a666c]" />
    </div>
  </div>
);

const App = () => (
  <div className="min-h-screen overflow-hidden bg-[#f0f0f0] font-['Open_Sans','Noto_Sans',sans-serif]">
    <TitleBar />
    <MenuBar />
    <MainToolbar />
    <LineToolbar />
    <ChartWindow />
    <ChartTabs />
    <StatusBar />
    <Taskbar />
  </div>
);

export default App;
